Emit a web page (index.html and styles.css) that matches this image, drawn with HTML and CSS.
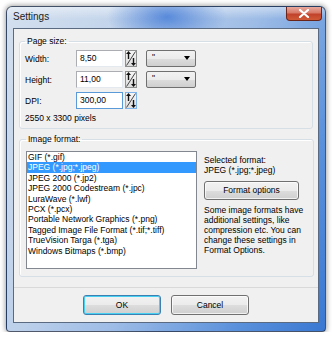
FILE: index.html
```html
<!DOCTYPE html>
<html lang="en">
<head>
    <meta charset="UTF-8">
    <title>Settings</title>
    <link rel="stylesheet" href="styles.css">
</head>
<body>
    <div class="window">
        <div class="titlebar">
            <span class="title">Settings</span>
            <span class="close">
                <svg width="12" height="9" viewBox="0 0 12 9">
                    <path d="M2 1 L10 8 M10 1 L2 8" stroke="#fff" stroke-width="2.2" stroke-linecap="round"/>
                </svg>
            </span>
        </div>

        <div class="client">
            <fieldset class="group page-size">
                <legend>Page size:</legend>

                <div class="field-row">
                    <label>Width:</label>
                    <span class="edit">8,50</span>
                    <span class="spin">
                        <svg width="12" height="17" viewBox="0 0 12 17">
                            <path d="M1.5 15.5 L10.5 1.5" stroke="#444" stroke-width="1"/>
                            <path d="M3.5 9 V3" stroke="#111" stroke-width="1.4"/>
                            <path d="M1 4 L3.5 1 L6 4 Z" fill="#111"/>
                            <path d="M8.5 8 V14" stroke="#111" stroke-width="1.4"/>
                            <path d="M6 13 L8.5 16 L11 13 Z" fill="#111"/>
                        </svg>
                    </span>
                    <span class="combo">"<i class="arrow"></i></span>
                </div>

                <div class="field-row">
                    <label>Height:</label>
                    <span class="edit">11,00</span>
                    <span class="spin">
                        <svg width="12" height="17" viewBox="0 0 12 17">
                            <path d="M1.5 15.5 L10.5 1.5" stroke="#444" stroke-width="1"/>
                            <path d="M3.5 9 V3" stroke="#111" stroke-width="1.4"/>
                            <path d="M1 4 L3.5 1 L6 4 Z" fill="#111"/>
                            <path d="M8.5 8 V14" stroke="#111" stroke-width="1.4"/>
                            <path d="M6 13 L8.5 16 L11 13 Z" fill="#111"/>
                        </svg>
                    </span>
                    <span class="combo">"<i class="arrow"></i></span>
                </div>

                <div class="field-row">
                    <label>DPI:</label>
                    <span class="edit focused">300,00</span>
                    <span class="spin focused">
                        <svg width="12" height="17" viewBox="0 0 12 17">
                            <path d="M1.5 15.5 L10.5 1.5" stroke="#444" stroke-width="1"/>
                            <path d="M3.5 9 V3" stroke="#111" stroke-width="1.4"/>
                            <path d="M1 4 L3.5 1 L6 4 Z" fill="#111"/>
                            <path d="M8.5 8 V14" stroke="#111" stroke-width="1.4"/>
                            <path d="M6 13 L8.5 16 L11 13 Z" fill="#111"/>
                        </svg>
                    </span>
                </div>

                <div class="pixels">2550 x 3300 pixels</div>
            </fieldset>

            <fieldset class="group image-format">
                <legend>Image format:</legend>
                <div class="format-body">
                    <ul class="listbox">
                        <li>GIF (*.gif)</li>
                        <li class="selected">JPEG (*.jpg;*.jpeg)</li>
                        <li>JPEG 2000 (*.jp2)</li>
                        <li>JPEG 2000 Codestream (*.jpc)</li>
                        <li>LuraWave (*.lwf)</li>
                        <li>PCX (*.pcx)</li>
                        <li>Portable Network Graphics (*.png)</li>
                        <li>Tagged Image File Format (*.tif;*.tiff)</li>
                        <li>TrueVision Targa (*.tga)</li>
                        <li>Windows Bitmaps (*.bmp)</li>
                    </ul>
                    <div class="format-info">
                        <p>Selected format:</p>
                        <p>JPEG (*.jpg;*.jpeg)</p>
                        <button class="btn options">Format options</button>
                        <p class="note">Some image formats have additional settings, like compression etc. You can change these settings in Format Options.</p>
                    </div>
                </div>
            </fieldset>

            <div class="separator"></div>

            <div class="actions">
                <button class="btn default">OK</button>
                <button class="btn">Cancel</button>
            </div>
        </div>
    </div>
</body>
</html>
```

FILE: styles.css
```css
* {
    box-sizing: border-box;
    margin: 0;
    padding: 0;
}

body {
    background: #fff;
    font-family: "Liberation Sans", Arial, sans-serif;
    font-size: 8.5px;
    color: #000;
}

.window {
    margin: 6px 0 0 6px;
    width: 320px;
    height: 326px;
    display: flex;
    flex-direction: column;
    border: 1px solid rgba(30, 40, 60, 0.75);
    border-radius: 6px 6px 4px 4px;
    background:
        radial-gradient(ellipse 60px 30px at 160px 10px, rgba(70, 125, 215, 0.85), rgba(70, 125, 215, 0) 100%),
        linear-gradient(to bottom, rgba(255, 255, 255, 0.45) 0, rgba(255, 255, 255, 0) 12px),
        linear-gradient(115deg, #d3dfee 0%, #bcd0ea 35%, #9cbbe6 55%, #5c92dc 80%, #3a78d2 100%);
    box-shadow: 0 0 5px 1px rgba(0, 0, 0, 0.35);
}

.titlebar {
    height: 21px;
    display: flex;
    align-items: flex-start;
    padding-left: 6px;
}

.title {
    font-size: 10px;
    line-height: 20px;
    color: #1b1b1b;
}

.close {
    margin-left: auto;
    margin-right: 3px;
    width: 36px;
    height: 14px;
    display: flex;
    align-items: center;
    justify-content: center;
    border: 1px solid #6b2419;
    border-top: none;
    border-radius: 0 0 4px 4px;
    background: linear-gradient(to bottom, #e8a89c 0%, #d77a68 45%, #c1422b 55%, #cf5a36 100%);
}

.client {
    flex: 1;
    margin: 0 6px 8px 6px;
    border: 1px solid #5a6a80;
    background: #f0f0f0;
    display: flex;
    flex-direction: column;
}

.group {
    margin: 0 5px;
    border: 1px solid #d5dfe5;
    border-radius: 3px;
    box-shadow: inset 1px 1px 0 #fff;
}

.group legend {
    padding: 0 2px;
    line-height: 11px;
}

.page-size {
    margin-top: 7px;
    padding: 3px 5px 4px 5px;
}

.field-row {
    display: flex;
    align-items: center;
    height: 17px;
    margin-bottom: 4px;
}

.field-row label {
    width: 51px;
}

.edit {
    width: 47px;
    height: 17px;
    line-height: 15px;
    padding-left: 3px;
    background: #fff;
    border: 1px solid #abadb3;
    border-right-color: #e3e9ef;
    border-bottom-color: #e3e9ef;
}

.edit.focused {
    border-color: #5b9ad8;
}

.spin {
    margin-left: 2px;
    width: 12px;
    height: 17px;
    display: flex;
    border: 1px solid #8e8f8f;
    background: linear-gradient(to bottom, #f6f6f6, #dcdcdc);
}

.spin svg {
    margin: -1px;
}

.spin.focused {
    border-color: #7eb4ea;
}

.combo {
    margin-left: 9px;
    width: 50px;
    height: 17px;
    display: flex;
    align-items: flex-start;
    padding: 1px 0 0 5px;
    border: 1px solid #707070;
    border-radius: 2px;
    background: linear-gradient(to bottom, #f2f2f2 0%, #ebebeb 50%, #dddddd 51%, #cfcfcf 100%);
    line-height: 10px;
}

.arrow {
    margin: 4px 5px 0 auto;
    width: 0;
    height: 0;
    border-left: 3.5px solid transparent;
    border-right: 3.5px solid transparent;
    border-top: 4px solid #000;
}

.pixels {
    margin-top: 2px;
    line-height: 11px;
}

.image-format {
    margin-top: 5px;
    padding: 6px 5px 7px 6px;
}

.format-body {
    display: flex;
    gap: 7px;
}

.listbox {
    width: 171px;
    height: 118px;
    list-style: none;
    background: #fff;
    border: 1px solid #828790;
}

.listbox li {
    line-height: 10.4px;
    padding-left: 1px;
    white-space: nowrap;
}

.listbox li.selected {
    background: #3399ff;
    color: #fff;
}

.format-info {
    flex: 1;
    padding-top: 4px;
    line-height: 10.4px;
}

.btn {
    font-family: inherit;
    font-size: 8.5px;
    color: #000;
    height: 19px;
    border: 1px solid #707070;
    border-radius: 3px;
    background: linear-gradient(to bottom, #f2f2f2 0%, #ebebeb 50%, #dddddd 51%, #cfcfcf 100%);
    box-shadow: inset 0 0 0 1px rgba(255, 255, 255, 0.7);
}

.options {
    display: block;
    width: 95px;
    margin: 5px 0;
}

.note {
    line-height: 10px;
    width: 104px;
}

.separator {
    margin-top: 10px;
    border-top: 1px solid #d9d9d9;
}

.actions {
    display: flex;
    justify-content: center;
    gap: 10px;
    margin-top: 7px;
}

.actions .btn {
    width: 78px;
    height: 20px;
}

.btn.default {
    border-color: #3c7fb1;
    box-shadow: inset 0 0 0 1px #48d0f2;
}
```
